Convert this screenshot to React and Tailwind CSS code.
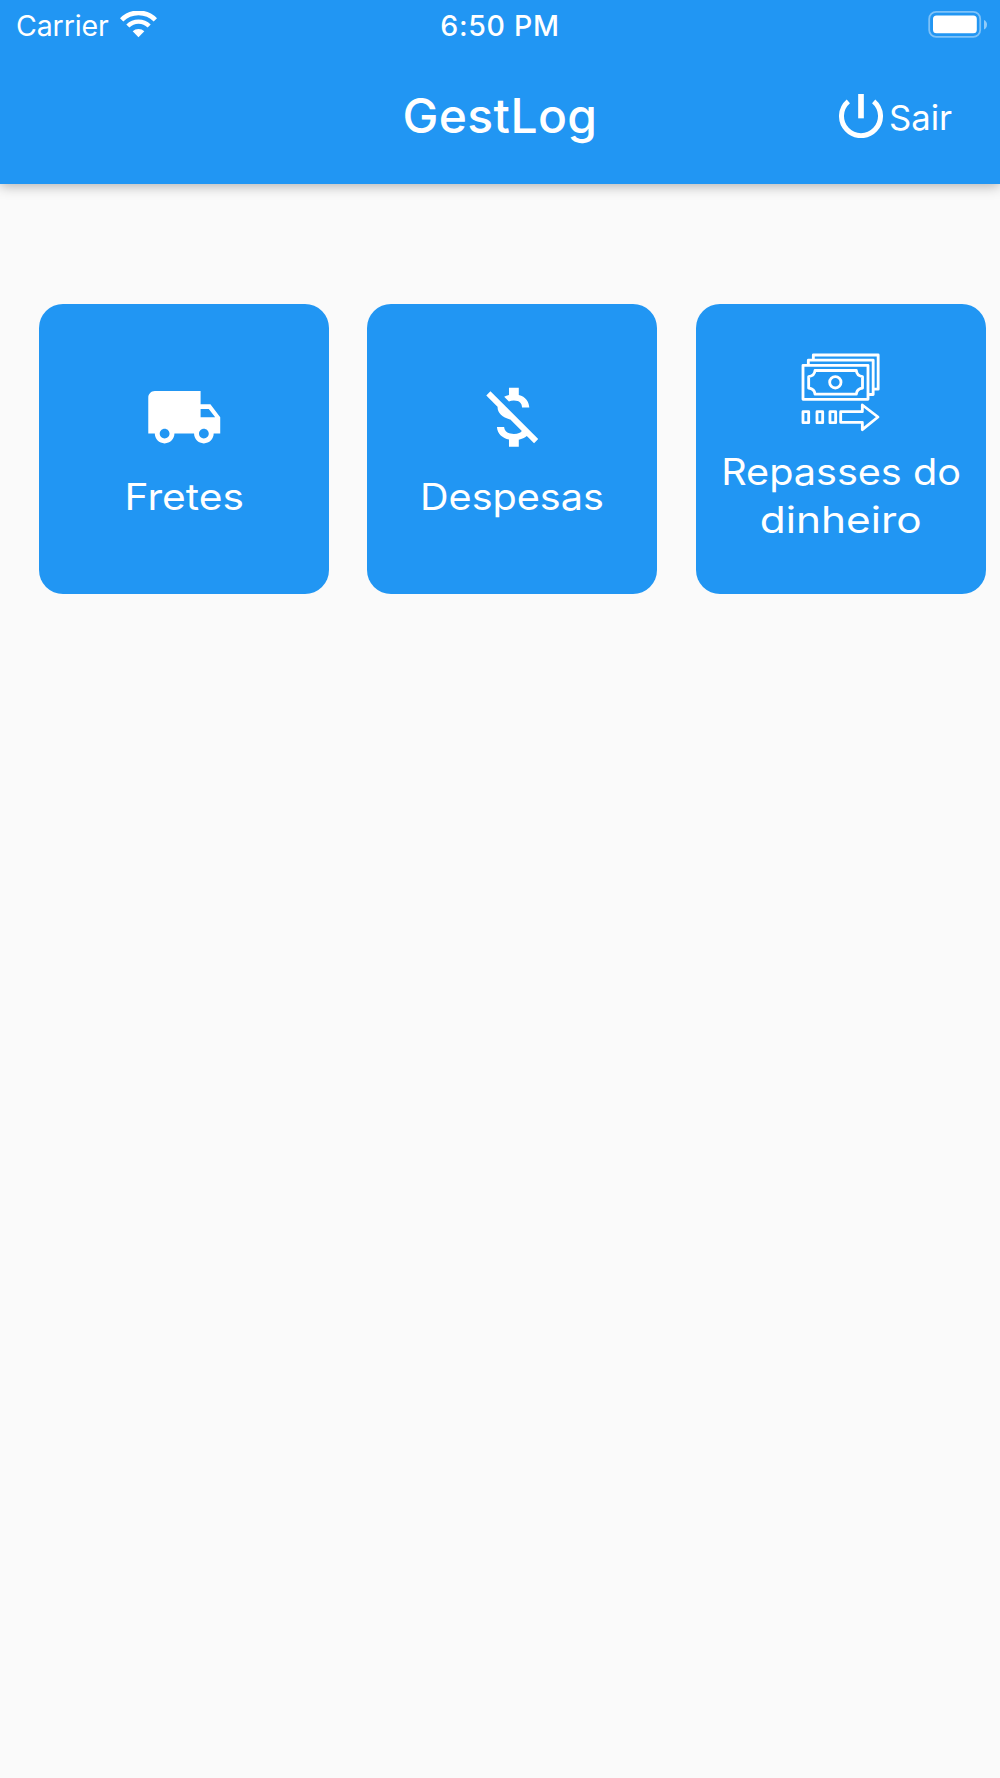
import { MdLocalShipping, MdMoneyOff } from "react-icons/md";

function WifiIcon() {
  return (
    <svg className="ml-[10px] h-[27px] w-[37px]" viewBox="0 0 111 81" fill="none" stroke="#fff">
      <path d="M5 26.500 A71 71 0 0 1 106 26.500" strokeWidth="14" />
      <path d="M23.5 45 A45 45 0 0 1 87.5 45" strokeWidth="13" />
      <path d="M38 61 A25 25 0 0 1 73 61 L55.500 78.500 Z" fill="#fff" stroke="none" />
    </svg>
  );
}

function BatteryIcon() {
  return (
    <svg className="h-[28px] w-[60px]" viewBox="0 0 60 28" fill="none">
      <rect x="1.200" y="0.900" width="51" height="25" rx="7" stroke="#fff" strokeOpacity="0.42" strokeWidth="1.800" />
      <rect x="5" y="4.600" width="43.800" height="17.700" rx="3.500" fill="#fff" />
      <path d="M56 9 Q59 10.500 59 13.500 Q59 17 56 18.500 Z" fill="#fff" fillOpacity="0.5" />
    </svg>
  );
}

function PowerIcon() {
  return (
    <svg className="h-[44px] w-[44px]" viewBox="0 0 132 132" fill="none" stroke="#fff">
      <path d="M28 22 A58.500 58.500 0 1 0 104 22" strokeWidth="15" />
      <path d="M66 0 V73" strokeWidth="17" />
    </svg>
  );
}

function MoneyTransferIcon() {
  return (
    <svg className="h-[100px] w-[100px]" viewBox="0 0 300 300" fill="none" stroke="#fff" strokeWidth="8.500" strokeLinejoin="round">
      <rect x="39" y="76" width="195" height="102" />
      <path d="M55 76 V60.500 H249.500 V163.500 H234" />
      <path d="M70 60.500 V45 H264.500 V147.500 H249.500" />
      <path d="M75 91.500 H199 Q200 107 217.500 110 V144 Q200 147 199 162.500 H75 Q74 147 56 144 V110 Q74 107 75 91.500 Z" />
      <circle cx="136" cy="127" r="17" />
      <rect x="39" y="215" width="17" height="33" />
      <rect x="81" y="215" width="17" height="33" />
      <rect x="120" y="215" width="17" height="33" />
      <path d="M152 215 H217 V195 L264 231 L217 269 V247 H152 Z" />
    </svg>
  );
}

function Card({ children }) {
  return (
    <div className="flex h-[290px] w-[290px] shrink-0 flex-col items-center rounded-[24px] bg-[#2196f3] text-center text-[37px] leading-[48px] font-normal whitespace-nowrap text-white">
      {children}
    </div>
  );
}

export default function App() {
  return (
    <div className="h-[1778px] w-[1000px] overflow-hidden bg-[#fafafa] font-['Inter',sans-serif]">
      <header className="h-[183.5px] bg-[#2196f3] text-white shadow-[0_2px_12px_rgba(0,0,0,0.3)]">
        <div className="grid h-[49px] grid-cols-3 items-center text-[28.5px] leading-[47px]">
          <div className="flex items-center pl-[16px]">
            <span className="inline-block w-[94px] pt-[2px] font-normal tracking-[-0.1px]">Carrier</span>
            <WifiIcon />
          </div>
          <span className="pt-[2px] text-center font-medium tracking-[0.7px]">6:50 PM</span>
          <div className="flex justify-end pr-[12px]">
            <BatteryIcon />
          </div>
        </div>
        <div className="grid h-[134px] grid-cols-3 items-center">
          <span />
          <h1 className="text-center text-[48px] leading-[60px] font-medium tracking-[0.4px]">GestLog</h1>
          <div className="flex items-center justify-end pr-[50px]">
            <PowerIcon />
            <span className="ml-[6px] inline-block w-[61.5px] origin-left scale-x-[1.02] pt-[4px] text-[34px] leading-[44px] font-normal">Sair</span>
          </div>
        </div>
      </header>
      <main className="flex gap-[38.4px] pt-[120.5px] pl-[38.8px]">
        <Card>
          <MdLocalShipping className="mt-[74px] size-[78.5px] shrink-0" />
          <span className="mt-[16px] inline-block scale-x-[1.1]">Fretes</span>
        </Card>
        <Card>
          <MdMoneyOff className="mt-[74px] size-[78.5px] shrink-0" />
          <span className="mt-[16px] inline-block scale-x-[1.07]">Despesas</span>
        </Card>
        <Card>
          <div className="mt-[36px] -ml-[1px]">
            <MoneyTransferIcon />
          </div>
          <span className="mt-[8px] inline-block scale-x-[1.07]">Repasses do</span>
          <span className="inline-block scale-x-[1.145]">dinheiro</span>
        </Card>
      </main>
    </div>
  );
}
